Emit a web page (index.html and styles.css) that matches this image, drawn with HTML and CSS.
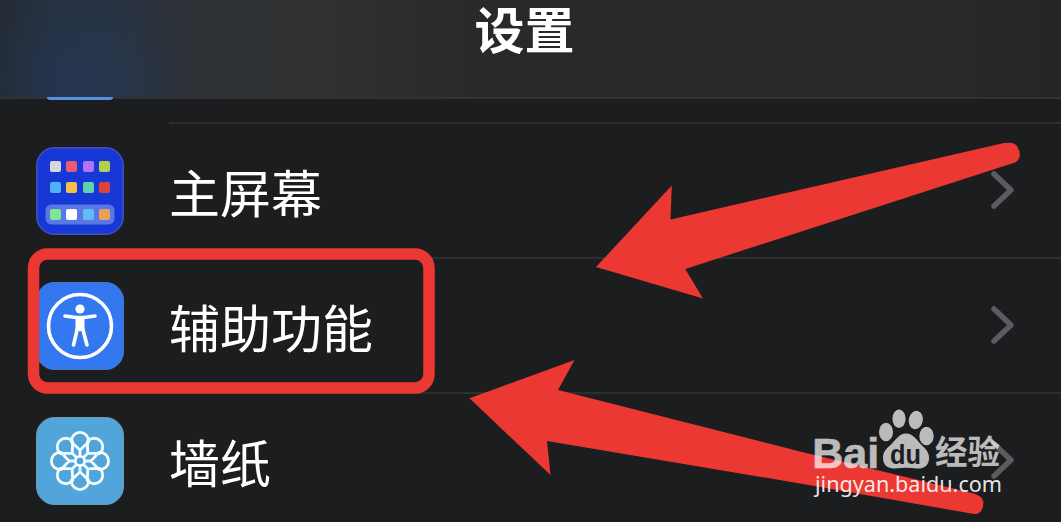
FILE: index.html
```
<!DOCTYPE html>
<html lang="zh-CN">

<head>
    <meta charset="UTF-8">
    <title>设置</title>
    <link rel="stylesheet" href="styles.css">
</head>

<body>
    <div class="screen">
        <header class="header">
            <h1>设置</h1>
        </header>

        <!-- Bottom of the row scrolled under the header -->
        <div class="previous-row">
            <div class="previous-icon"></div>
        </div>

        <ul class="settings">
            <li class="row">
                <svg class="icon" viewBox="0 0 88 88">
                    <rect x="0.75" y="0.75" width="86.5" height="86.5" rx="18" fill="#1638d6" stroke="#4450b5" stroke-width="1.5" />
                    <rect x="9.5" y="57.5" width="69" height="20" rx="6" fill="#5b76e6" />
                    <rect x="14" y="14" width="11" height="11" rx="2" fill="#d6d7df" />
                    <rect x="30" y="14" width="11" height="11" rx="2" fill="#ec5a70" />
                    <rect x="47" y="14" width="11" height="11" rx="2" fill="#b073f3" />
                    <rect x="63" y="14" width="11" height="11" rx="2" fill="#b3d04b" />
                    <rect x="14" y="35" width="11" height="11" rx="2" fill="#4fb2f6" />
                    <rect x="30" y="35" width="11" height="11" rx="2" fill="#f6c044" />
                    <rect x="47" y="35" width="11" height="11" rx="2" fill="#5bd3ab" />
                    <rect x="63" y="35" width="11" height="11" rx="2" fill="#dc4437" />
                    <rect x="14" y="62" width="11" height="11" rx="2" fill="#7fe693" />
                    <rect x="30" y="62" width="11" height="11" rx="2" fill="#ffffff" />
                    <rect x="47" y="62" width="11" height="11" rx="2" fill="#60bdf3" />
                    <rect x="63" y="62" width="11" height="11" rx="2" fill="#e9a05d" />
                </svg>
                <div class="row-body">
                    <span>主屏幕</span>
                    <svg class="chevron" viewBox="0 0 24 38"><path d="M3 3L20 19L3 35" /></svg>
                </div>
            </li>
            <li class="row">
                <svg class="icon" viewBox="0 0 88 88">
                    <rect x="0.5" y="0.5" width="87" height="87" rx="18" fill="#3478f1" stroke="#4b79c4" />
                    <circle cx="44" cy="44" r="31.5" fill="none" stroke="#fff" stroke-width="3.6" />
                    <circle cx="44" cy="27" r="4.6" fill="#fff" />
                    <path d="M29 34L40 35.5H48L59 34" fill="none" stroke="#fff" stroke-width="3.6" stroke-linecap="round" stroke-linejoin="round" />
                    <path d="M39.5 35H48.5V49H39.5Z" fill="#fff" />
                    <path d="M41.3 47L37.5 63M46.7 47L51 63" fill="none" stroke="#fff" stroke-width="3.6" stroke-linecap="round" />
                </svg>
                <div class="row-body">
                    <span>辅助功能</span>
                    <svg class="chevron" viewBox="0 0 24 38"><path d="M3 3L20 19L3 35" /></svg>
                </div>
            </li>
            <li class="row">
                <svg class="icon" viewBox="0 0 88 88">
                    <defs>
                        <path id="petal" d="M44 39.5V33L35.4 25V24A8.6 8.6 0 0 1 52.6 24V25L44 33" />
                    </defs>
                    <rect x="0.5" y="0.5" width="87" height="87" rx="18" fill="#52a5da" stroke="#6c9db5" />
                    <g fill="none" stroke="#f2fdff" stroke-width="2.8" stroke-linejoin="round">
                        <circle cx="44" cy="44" r="4.7" />
                        <use href="#petal" />
                        <use href="#petal" transform="rotate(45 44 44)" />
                        <use href="#petal" transform="rotate(90 44 44)" />
                        <use href="#petal" transform="rotate(135 44 44)" />
                        <use href="#petal" transform="rotate(180 44 44)" />
                        <use href="#petal" transform="rotate(225 44 44)" />
                        <use href="#petal" transform="rotate(270 44 44)" />
                        <use href="#petal" transform="rotate(315 44 44)" />
                    </g>
                </svg>
                <div class="row-body">
                    <span>墙纸</span>
                    <svg class="chevron" viewBox="0 0 24 38"><path d="M3 3L20 19L3 35" /></svg>
                </div>
            </li>
        </ul>

        <!-- Red box, arrows and watermark lie over the list -->
        <svg class="overlay" viewBox="0 0 1061 522">
            <g fill="#eb3833">
                <rect x="33.5" y="254" width="395.5" height="134" rx="14" fill="none" stroke="#eb3833" stroke-width="11.5" />
                <path d="M596 267L671.8 185.5L670.5 219.5L1004 143Q1014 141.5 1017 146Q1021 153 1019.5 157Q1018.5 161 1015 162.5L685.2 269L703 298.5Z" />
                <path d="M469.5 398.3L574.5 360L558 390L800 451.500L972 493Q983 496 983.5 502Q983 514.5 974 514L800 483.5L547 441L550.5 475Z" />
            </g>
            <g class="watermark">
                <text class="brand" x="812.3" y="467.5">Bai</text>
                <ellipse cx="886" cy="432" rx="7" ry="9.2" />
                <ellipse cx="899" cy="418.8" rx="6.6" ry="9.2" />
                <ellipse cx="915.8" cy="420" rx="7" ry="9.2" transform="rotate(12 915.8 420)" />
                <ellipse cx="926.5" cy="436" rx="7.2" ry="9.2" />
                <path d="M906 433.5C914 433.5 917 441 923 446.5C927 450 929.5 454 929 459C928.5 466 923 469 917 468.5C910 467.5 902 467.5 895 468.5C888 469 883 465 883 458C883 452 886 449 890 445.5C896 440 899 433.5 906 433.5Z" />
                <text class="du" x="890" y="463.5" textLength="31" lengthAdjust="spacingAndGlyphs">du</text>
                <text class="product" x="935" y="464" textLength="65" lengthAdjust="spacingAndGlyphs">经验</text>
            </g>
            <text class="url" x="815" y="492" textLength="187" lengthAdjust="spacingAndGlyphs">jingyan.baidu.com</text>
        </svg>
    </div>
</body>

</html>
```
FILE: styles.css
```
body {
    margin: 0;
    background-color: #1c1d1f;
    color: #fff;
    font-family: "Noto Sans CJK SC", sans-serif;
}

.screen {
    position: relative;
    width: 1061px;
    height: 522px;
    overflow: hidden;
    background-color: #1c1d1f;
}

.header {
    box-sizing: border-box;
    height: 99px;
    border-bottom: 2px solid #313234;
    background:
        radial-gradient(ellipse 110px 120px at 78px 82px, rgba(36, 55, 90, 0.7), rgba(36, 55, 90, 0) 100%),
        linear-gradient(90deg, #232a32 0, #28323d 60px, #29333e 110px, #2d3239 165px, #2f3235 230px, #303132 320px, #28292b 480px, #28292b 940px, #242527 1061px);
}

h1 {
    margin: 0;
    padding-right: 12px;
    font-size: 50px;
    font-weight: 700;
    line-height: 55px;
    text-align: center;
}

.previous-row {
    height: 25px;
    margin-top: -2px;
    padding-left: 47px;
}

.previous-icon {
    width: 66px;
    height: 3px;
    border-radius: 0 0 8px 8px;
    background-color: #5790dc;
}

.settings {
    margin: 0;
    padding: 0;
    list-style: none;
}

.row {
    display: flex;
    align-items: center;
    height: 135px;
    padding-left: 36px;
    gap: 45px;
}

.icon {
    flex: none;
    width: 88px;
    height: 88px;
    margin-top: 2px;
}

.row-body {
    box-sizing: border-box;
    display: flex;
    flex: 1;
    align-items: center;
    justify-content: space-between;
    height: 135px;
    padding-right: 46px;
    border-top: 2px solid #2d2e30;
    font-size: 51px;
    font-weight: 400;
    line-height: 74px;
}

.chevron {
    width: 24px;
    height: 38px;
    margin-bottom: 1px;
}

.chevron path {
    fill: none;
    stroke: #5b5c60;
    stroke-width: 5.5;
    stroke-linecap: round;
    stroke-linejoin: round;
}

.overlay {
    position: absolute;
    top: 0;
    left: 0;
    width: 1061px;
    height: 522px;
}

.watermark {
    fill: #fff;
    opacity: 0.7;
}

.brand {
    font: bold 43px "Liberation Sans", sans-serif;
    stroke: #fff;
    stroke-width: 0.6px;
}

.du {
    fill: #1c1d1f;
    font: bold 28px "Liberation Sans", sans-serif;
}

.product {
    font: bold 33px "Noto Sans CJK SC", sans-serif;
}

.url {
    fill: rgba(255, 255, 255, 0.9);
    font: 22px "Noto Sans", sans-serif;
}
```
